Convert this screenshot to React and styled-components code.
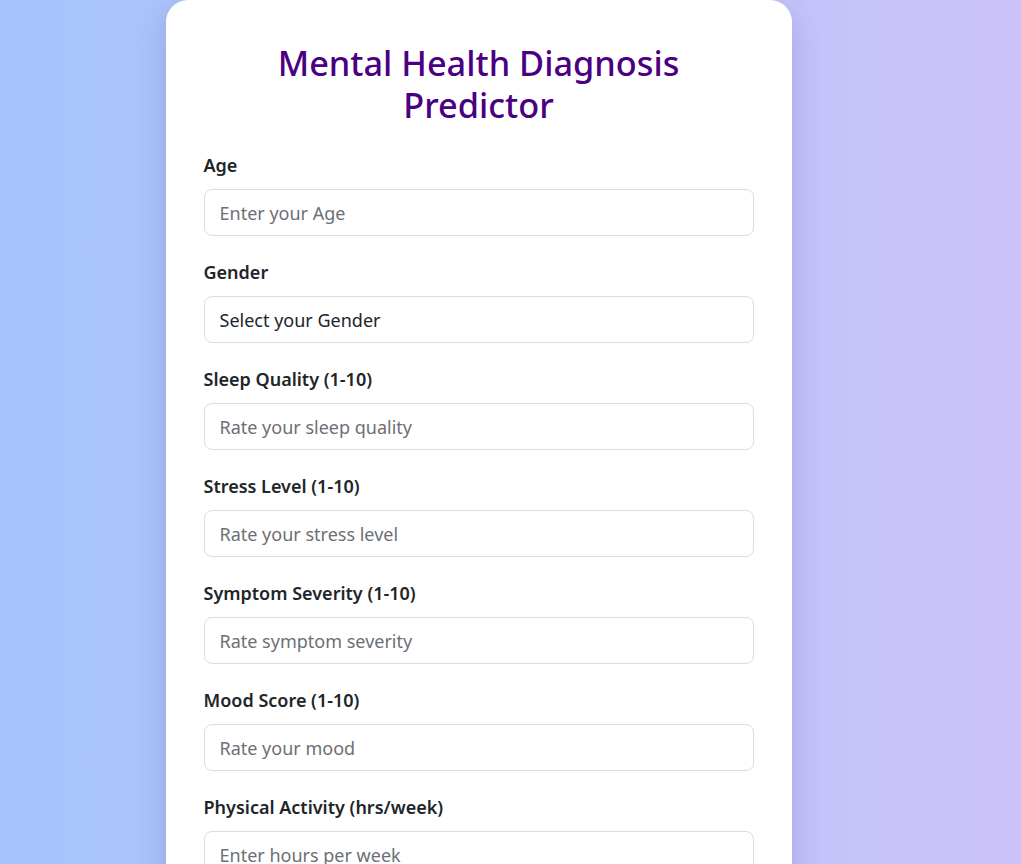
import React from "react"
import styled, { createGlobalStyle } from "styled-components"

const GlobalStyle = createGlobalStyle`
  html, body {
    margin: 0;
    padding: 0;
  }
  body {
    min-height: 100vh;
    background: linear-gradient(90deg, #a6c3fb 0%, #b9c3fb 50%, #cdc3fb 100%);
    font-family: "Noto Sans", "Open Sans", sans-serif;
  }
`

const Page = styled.div`
  display: flex;
  justify-content: center;
  min-height: 100vh;
  padding-right: 64px;
`

const Card = styled.div`
  width: 550px;
  background: #fff;
  border-radius: 22px;
  padding: 42px 38px 40px;
  box-shadow: 0 10px 30px rgba(60, 60, 140, 0.22);
`

const Title = styled.h1`
  margin: 0 0 26px;
  text-align: center;
  color: #4b0082;
  font-size: 34.3px;
  font-weight: 500;
  line-height: 42px;
`

const Group = styled.div`
  display: flex;
  flex-direction: column;
  margin-bottom: 23px;
`

const Label = styled.label`
  font-size: 18px;
  font-weight: 600;
  color: #212529;
  line-height: 27px;
  margin-bottom: 10px;
`

const Field = styled.div`
  box-sizing: border-box;
  height: 47px;
  border: 1px solid #dcdce3;
  border-radius: 8px;
  padding: 0 15px;
  display: flex;
  align-items: center;
  font-size: 18px;
  color: ${p => (p.filled ? "#212529" : "#6c6f76")};
`

const fields = [
  { label: "Age", text: "Enter your Age" },
  { label: "Gender", text: "Select your Gender", filled: true },
  { label: "Sleep Quality (1-10)", text: "Rate your sleep quality" },
  { label: "Stress Level (1-10)", text: "Rate your stress level" },
  { label: "Symptom Severity (1-10)", text: "Rate symptom severity" },
  { label: "Mood Score (1-10)", text: "Rate your mood" },
  { label: "Physical Activity (hrs/week)", text: "Enter hours per week" },
]

export default function App() {
  return (
    <Page>
      <GlobalStyle />
      <Card>
        <Title>
          Mental Health Diagnosis
          <br />
          Predictor
        </Title>
        {fields.map(f => (
          <Group key={f.label}>
            <Label>{f.label}</Label>
            <Field filled={f.filled}>{f.text}</Field>
          </Group>
        ))}
      </Card>
    </Page>
  )
}
